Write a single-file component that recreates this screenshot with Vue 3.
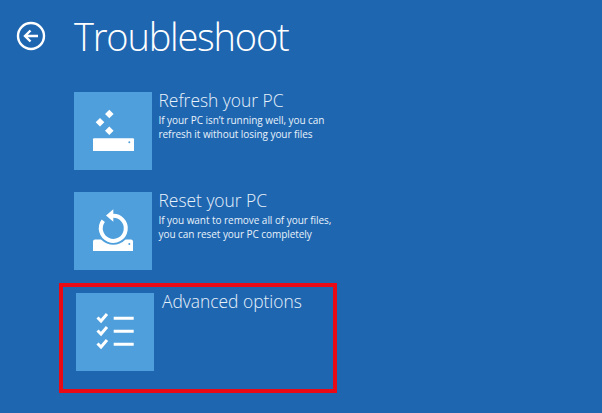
<script setup>
const options = [
  {
    id: 'refresh',
    title: 'Refresh your PC',
    lines: ['If your PC isn’t running well, you can', 'refresh it without losing your files'],
  },
  {
    id: 'reset',
    title: 'Reset your PC',
    lines: ['If you want to remove all of your files,', 'you can reset your PC completely'],
  },
]
</script>

<template>
  <div class="screen">
    <header class="head">
      <svg class="back" width="30" height="30" viewBox="0 0 30 30">
        <circle cx="15" cy="15" r="13" fill="none" stroke="#fff" stroke-width="2.4" />
        <path d="M22 15H9M14.5 9.5 9 15l5.5 5.5" fill="none" stroke="#fff" stroke-width="2.4" />
      </svg>
      <h1>Troubleshoot</h1>
    </header>

    <div class="list">
      <div v-for="opt in options" :key="opt.id" class="option">
        <div class="tile">
          <svg v-if="opt.id === 'refresh'" width="78" height="78" viewBox="0 0 78 78">
            <path d="M31 22l4.300-4.300 4.300 4.300-4.300 4.300zM21.700 30.300l4.300-4.300 4.300 4.300-4.300 4.300zM31 38.700l4.300-4.300 4.300 4.300-4.300 4.300z" fill="#fff" />
            <path d="M19 47.300q0-1 1-1h39q1 0 1 1V59H19z" fill="#fff" />
            <circle cx="55.300" cy="50.300" r="1" fill="#4e9fdc" />
          </svg>
          <svg v-else width="78" height="78" viewBox="0 0 78 78">
            <path d="M19 59V49.500q0-2 2-2h36q2 0 2 2V59z" fill="#fff" />
            <circle cx="39.300" cy="36.300" r="16.500" fill="#4e9fdc" />
            <path d="M38 23.900A12.500 12.500 0 1 1 29.300 28.800" fill="none" stroke="#fff" stroke-width="4" />
            <path d="M39.300 17.300v12.400L32 23.500z" fill="#fff" />
            <circle cx="55.300" cy="52" r="1" fill="#4e9fdc" />
          </svg>
        </div>
        <div class="copy">
          <div class="title">{{ opt.title }}</div>
          <p v-for="line in opt.lines" :key="line">{{ line }}</p>
        </div>
      </div>
    </div>

    <div class="picked">
      <div class="option">
        <div class="tile">
          <svg width="78" height="78" viewBox="0 0 78 78">
            <g fill="none" stroke="#fff" stroke-width="3">
              <path d="M21.500 24.500l3.500 3.500 6-7M21.500 37.500l3.500 3.500 6-7M21.500 50.500l3.500 3.500 6-7" />
              <path d="M37.700 25.300h20M37.700 38.300h20M37.700 51.300h20" />
            </g>
          </svg>
        </div>
        <div class="copy">
          <div class="title">Advanced options</div>
        </div>
      </div>
    </div>
  </div>
</template>

<style>
html, body {
  margin: 0;
  background: #1f66b1;
}
</style>

<style scoped>
.screen {
  width: 602px;
  height: 413px;
  overflow: hidden;
  box-sizing: border-box;
  background: #1f66b1;
  color: #fff;
  font-family: "Open Sans", "Liberation Sans", sans-serif;
}

.head {
  display: flex;
  align-items: center;
  height: 72px;
  padding-left: 16px;
}

.back {
  margin-right: 28px;
}

h1 {
  margin: 0;
  font-size: 38px;
  font-weight: 300;
  line-height: 69px;
  letter-spacing: -1.2px;
}

.list {
  display: flex;
  flex-direction: column;
  gap: 22px;
  padding: 20px 0 0 74px;
}

.option {
  display: flex;
  gap: 6.500px;
}

.tile {
  flex: none;
  width: 78px;
  height: 78px;
  background: #4e9fdc;
}

.tile svg {
  display: block;
}

.copy {
  margin-top: -2px;
}

.title {
  font-size: 17.400px;
  font-weight: 300;
  line-height: 20px;
  margin-bottom: 3px;
  color: #e8f2fa;
}

.copy p {
  margin: 0;
  font-size: 10px;
  line-height: 14px;
  letter-spacing: -0.05px;
  color: #e8f2fa;
}

.picked {
  box-sizing: border-box;
  width: 278px;
  height: 110px;
  margin: 13px 0 0 59px;
  padding: 6px 0 0 13px;
  border: 4px solid #ea0a16;
}

.picked .option {
  gap: 8px;
}
</style>
